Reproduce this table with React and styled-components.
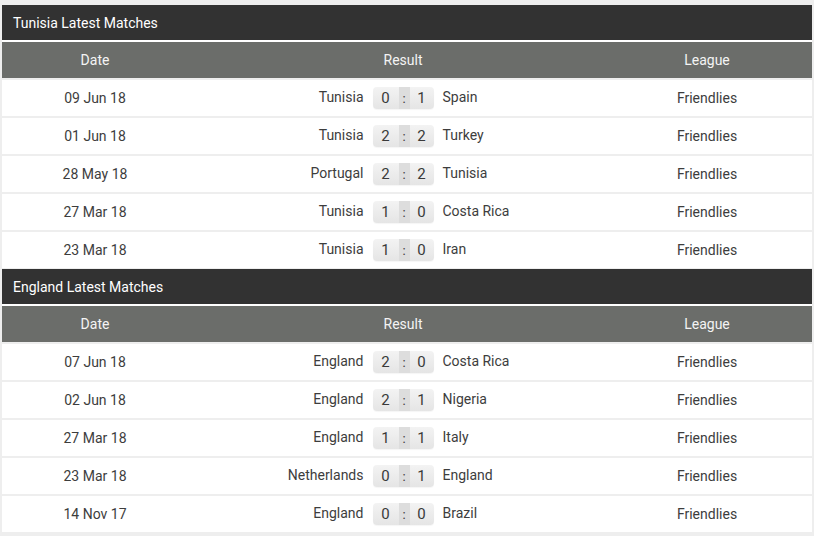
import React from "react";
import styled, { createGlobalStyle } from "styled-components";

const sections = [
  {
    title: "Tunisia Latest Matches",
    matches: [
      { date: "09 Jun 18", home: "Tunisia", hs: 0, as: 1, away: "Spain" },
      { date: "01 Jun 18", home: "Tunisia", hs: 2, as: 2, away: "Turkey" },
      { date: "28 May 18", home: "Portugal", hs: 2, as: 2, away: "Tunisia" },
      { date: "27 Mar 18", home: "Tunisia", hs: 1, as: 0, away: "Costa Rica" },
      { date: "23 Mar 18", home: "Tunisia", hs: 1, as: 0, away: "Iran" },
    ],
  },
  {
    title: "England Latest Matches",
    matches: [
      { date: "07 Jun 18", home: "England", hs: 2, as: 0, away: "Costa Rica" },
      { date: "02 Jun 18", home: "England", hs: 2, as: 1, away: "Nigeria" },
      { date: "27 Mar 18", home: "England", hs: 1, as: 1, away: "Italy" },
      { date: "23 Mar 18", home: "Netherlands", hs: 0, as: 1, away: "England" },
      { date: "14 Nov 17", home: "England", hs: 0, as: 0, away: "Brazil" },
    ],
  },
];

function App() {
  return (
    <>
      <GlobalStyle />
      <Page>
        {sections.map(section => (
          <Panel key={section.title}>
            <Title>{section.title}</Title>
            <HeadRow>
              <Cell>Date</Cell>
              <Cell>Result</Cell>
              <Cell league>League</Cell>
            </HeadRow>
            {section.matches.map(m => (
              <Row key={m.date + m.home}>
                <Cell>{m.date}</Cell>
                <Result>
                  <Team side="home">{m.home}</Team>
                  <Score>
                    <Goal>{m.hs}</Goal>
                    <Colon>:</Colon>
                    <Goal>{m.as}</Goal>
                  </Score>
                  <Team>{m.away}</Team>
                </Result>
                <Cell league>Friendlies</Cell>
              </Row>
            ))}
          </Panel>
        ))}
      </Page>
    </>
  );
}

const GlobalStyle = createGlobalStyle`
  body {
    margin: 0;
    background: #eeeeee;
    font-family: Roboto, "Liberation Sans", sans-serif;
  }
`;

const Page = styled("div")`
  padding: 5px 2px 0 2px;
  display: flex;
  flex-direction: column;
  gap: 1px;
`;

const Panel = styled("section")`
  display: flex;
  flex-direction: column;
`;

const Title = styled("div")`
  height: 35px;
  line-height: 36px;
  padding-left: 11px;
  background: #323232;
  color: #ffffff;
  font-size: 14px;
  border-bottom: 2px solid #ffffff;
`;

const grid = `
  display: grid;
  grid-template-columns: 186px 430px 1fr;
  align-items: center;
  height: 36px;
  font-size: 14px;
`;

const HeadRow = styled("div")`
  ${grid}
  background: #6b6d6a;
  color: #f4f4f4;
`;

const Row = styled("div")`
  ${grid}
  margin-top: 2px;
  background: #ffffff;
  color: #3d3d3d;
`;

const Cell = styled("div")`
  text-align: center;
  padding-right: ${p => (p.league ? "16px" : "0")};
`;

const Result = styled("div")`
  display: flex;
  align-items: center;
  gap: 9px;
`;

const Team = styled("div")`
  flex: 1;
  text-align: ${p => (p.side === "home" ? "right" : "left")};
  position: relative;
  top: -1px;
`;

const Score = styled("div")`
  display: grid;
  grid-template-columns: 26px 11px 24px;
  height: 22px;
  border-radius: 4px;
  overflow: hidden;
  background: linear-gradient(#f3f3f3, #e5e5e5);
  box-shadow: 0 1px 1px rgba(0, 0, 0, 0.04);
`;

const Goal = styled("span")`
  display: flex;
  align-items: center;
  justify-content: center;
  font-size: 15px;
  color: #3a3a3a;
`;

const Colon = styled(Goal)`
  background: #dddddd;
  font-size: 13px;
`;

export default App;
